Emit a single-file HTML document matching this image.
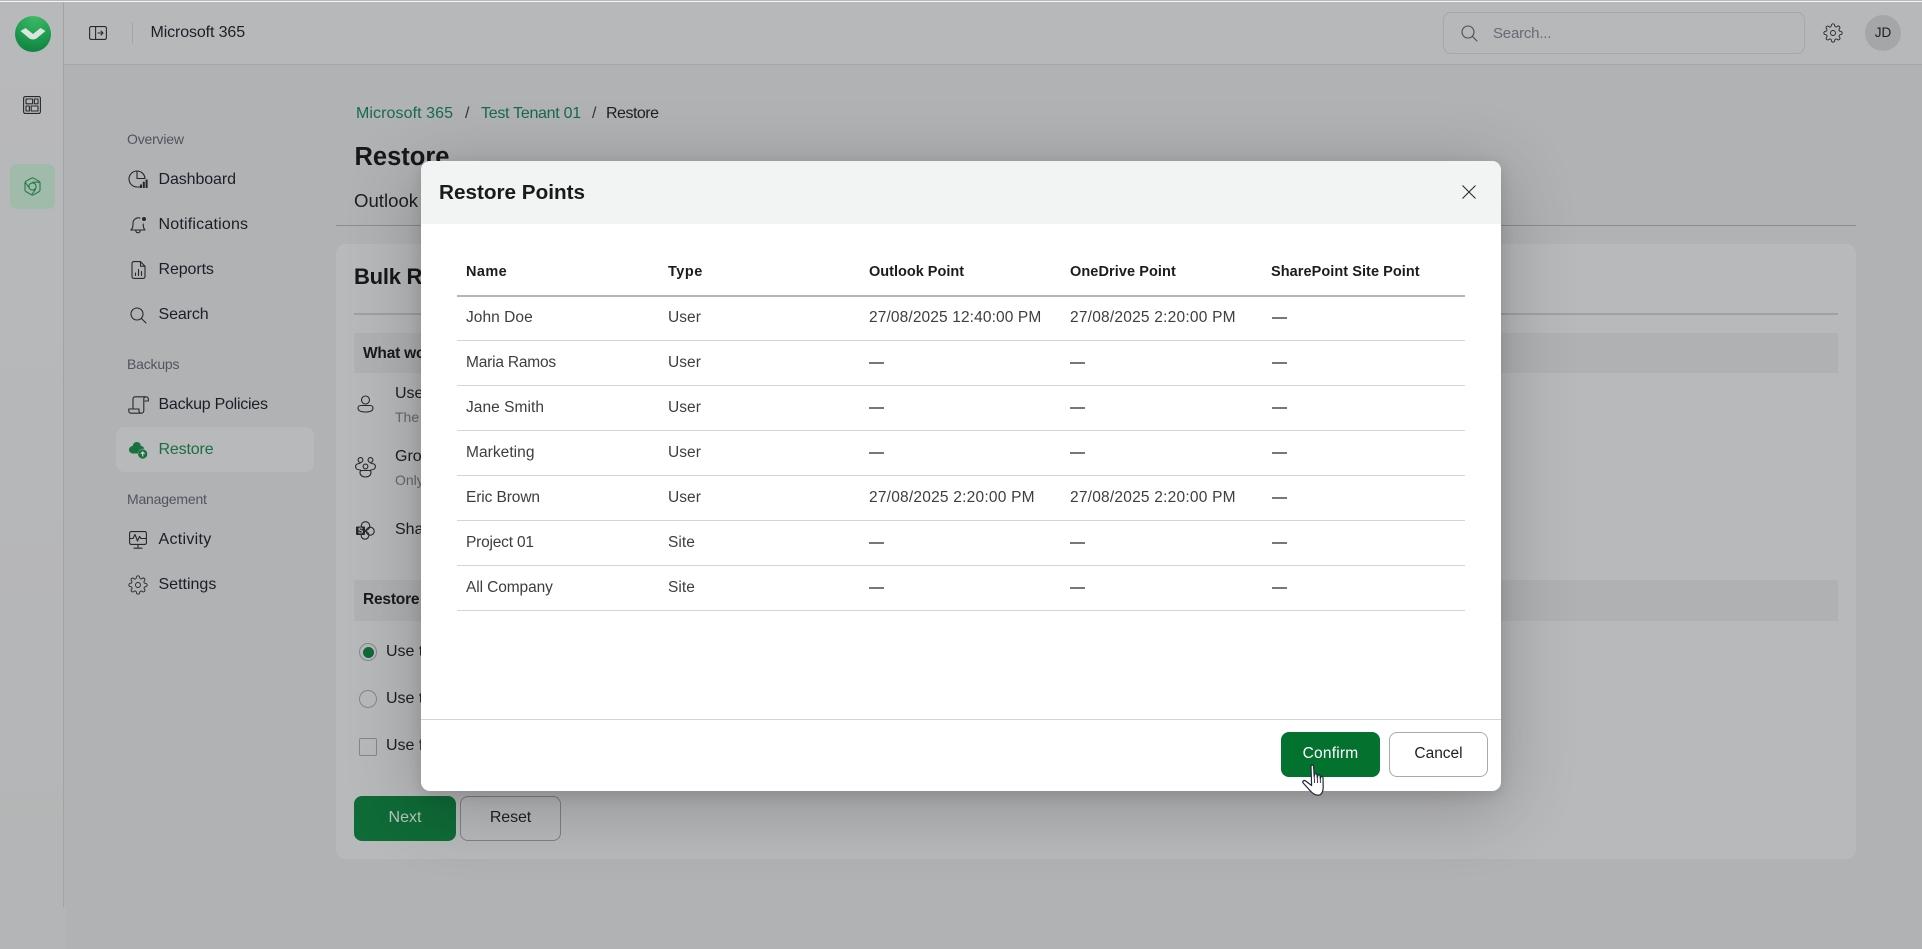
<!DOCTYPE html>
<html><head><meta charset="utf-8"><title>Restore Points</title>
<style>
html,body{margin:0;padding:0;width:1922px;height:949px;overflow:hidden;background:#b1b2b4}
body{position:relative;font-family:"Liberation Sans",sans-serif;color:#1b1d22}
.a{position:absolute}
.t{position:absolute;white-space:nowrap;line-height:20px;font-size:16px;margin-top:1px}
svg{position:absolute;overflow:visible}
.i{fill:none;stroke:#26282c;stroke-width:1.1;stroke-linecap:round;stroke-linejoin:round}
.lab{font-size:14px;color:#52545c;letter-spacing:-.2px;margin-top:0}
.nav{font-size:16px;color:#1c1e26}
.th{font-size:14.5px;font-weight:bold;color:#1c1c1c}
.td{font-size:15.5px;color:#3e3e3e;letter-spacing:.05px}
.d{position:absolute;height:1px;width:15px;background:#777;border-top:1px solid #777}
.ln{position:absolute;left:457px;width:1008px;height:1px;background:#d4d4d4}
</style></head><body>
<!-- base -->
<div class="a" style="left:0;top:0;width:1922px;height:1px;background:#b8b9bb"></div>
<div class="a" style="left:0;top:1px;width:1922px;height:1px;background:#f4f4f4;z-index:5"></div>
<div class="a" style="left:0;top:2px;width:63px;height:905px;background:linear-gradient(#b8b9bb,#b4b5b6)"></div>
<div class="a" style="left:0;top:907px;width:66px;height:42px;background:#b4b5b6"></div>
<div class="a" style="left:63px;top:2px;width:1px;height:905px;background:#a3a4a6"></div>
<div class="a" style="left:64px;top:2px;width:1858px;height:62px;background:#b7b8ba"></div>
<div class="a" style="left:64px;top:64px;width:1858px;height:1px;background:#a5a6a8"></div>

<!-- logo -->
<div class="a" style="left:15px;top:16px;width:36px;height:36px;border-radius:50%;background:radial-gradient(circle at 55% 0%,#3fbb66 0%,#22a253 45%,#0b7a3c 100%)"></div>
<svg style="left:15px;top:16px" width="36" height="36" viewBox="0 0 36 36"><path d="M5.5 15 L10.5 12 L18 18 L25.5 12 L30.5 15 L21.5 22.5 Q18 24.5 14.5 22.5 Z" fill="#dde4df"/></svg>
<!-- rail icons -->
<svg style="left:23px;top:96px" width="18" height="18" viewBox="0 0 18 18"><rect x=".6" y=".6" width="16.8" height="16.8" rx="1.6" class="i" stroke-width="1.2"/><rect x="3" y="3" width="6.6" height="4.8" class="i"/><rect x="11.4" y="3" width="3.6" height="4.8" class="i"/><rect x="3" y="10" width="3.4" height="5" class="i"/><rect x="8.2" y="10" width="6.8" height="5" class="i"/></svg>
<div class="a" style="left:10px;top:164px;width:45px;height:45px;border-radius:7px;background:#a1bbaa"></div>
<svg style="left:24px;top:177px" width="17" height="19" viewBox="0 0 17 19"><g fill="none" stroke="#217a49" stroke-width="1.1" stroke-linejoin="round"><path d="M7.4 1.2 Q8.5 .6 9.6 1.2 L15.2 4.3 Q16 4.8 16 5.8 V13 Q16 14 15.2 14.5 L9.6 17.8 Q8.5 18.4 7.4 17.8 L1.8 14.5 Q1 14 1 13 V5.8 Q1 4.8 1.8 4.3 Z"/><circle cx="8.5" cy="9.5" r="3.6"/><path d="M1.2 5 L5.4 11.4 M15.8 5.2 H8.4 M7.6 18 L12 11.4"/></g></svg>

<!-- header -->
<svg style="left:89px;top:26px" width="18" height="14" viewBox="0 0 18 14"><rect x=".6" y=".6" width="16.8" height="12.8" rx="1.6" class="i" stroke-width="1.2"/><path d="M6.6.6 V13.4 M9 7 H14 M12 5 L14 7 L12 9" class="i"/></svg>
<div class="a" style="left:132px;top:22px;width:1px;height:22px;background:#a5a6a8"></div>
<div class="t" style="left:150.5px;top:22px;letter-spacing:-.12px;color:#1d1f27">Microsoft 365</div>
<div class="a" style="left:1443px;top:12px;width:360px;height:40px;border:1px solid #a6a7a9;border-radius:8px"></div>
<svg style="left:1461px;top:25px" width="17" height="17" viewBox="0 0 17 17"><circle cx="7" cy="7" r="6" class="i" style="stroke:#4a4d53"/><path d="M11.5 11.5 L16 16" class="i" style="stroke:#4a4d53"/></svg>
<div class="t" style="left:1493px;top:23px;font-size:15px;color:#666b75;letter-spacing:-.2px">Search...</div>
<svg style="left:1823px;top:23px" width="20" height="20" viewBox="0 0 24 24"><g class="i" stroke-width="1.4"><circle cx="12" cy="12" r="3"/><path d="M19.4 15a1.65 1.65 0 0 0 .33 1.82l.06.06a2 2 0 1 1-2.83 2.83l-.06-.06a1.65 1.65 0 0 0-2.82 1.17V21a2 2 0 1 1-4 0v-.09A1.65 1.65 0 0 0 7.2 19.7l-.06.06a2 2 0 1 1-2.83-2.83l.06-.06A1.65 1.65 0 0 0 3.2 14H3a2 2 0 1 1 0-4h.09A1.65 1.65 0 0 0 4.3 7.2l-.06-.06a2 2 0 1 1 2.83-2.83l.06.06A1.65 1.65 0 0 0 10 3.2V3a2 2 0 1 1 4 0v.09a1.65 1.65 0 0 0 2.82 1.17l.06-.06a2 2 0 1 1 2.83 2.83l-.06.06A1.65 1.65 0 0 0 20.8 10H21a2 2 0 1 1 0 4h-.09a1.65 1.65 0 0 0-1.51 1z"/></g></svg>
<div class="a" style="left:1865px;top:15px;width:36px;height:36px;border-radius:50%;background:#a5a6a8"></div>
<div class="t" style="left:1865px;top:22px;width:36px;text-align:center;font-size:13.5px;color:#1d1f27">JD</div>

<!-- sidenav -->
<div class="t lab" style="left:127px;top:129px">Overview</div>
<svg style="left:129px;top:170px" width="19" height="19" viewBox="0 0 19 19"><path d="M8 1 A8 8 0 1 0 8 17 H11" class="i"/><path d="M8 1 V8.5 H16 A8 8 0 0 0 8 1 Z" class="i"/><path d="M12 18 V14.5 M14.8 18 V11.8 M17.6 18 V9.5" stroke="#26282c" stroke-width="2" fill="none"/></svg>
<div class="t nav" style="left:158.5px;top:169px;letter-spacing:-.1px">Dashboard</div>
<svg style="left:130px;top:216px" width="17" height="18" viewBox="0 0 17 18"><path d="M10 2 A5.5 5.5 0 0 0 3 7 C3 11 2.6 12.5 .8 14 H15 C13.6 12.7 13.2 11 13.2 8 M5.8 14.5 C6 17.5 10 17.5 10.2 14.5" class="i"/><circle cx="14" cy="3" r="2" fill="#26282c"/></svg>
<div class="t nav" style="left:158.5px;top:214px;letter-spacing:.2px">Notifications</div>
<svg style="left:131px;top:261px" width="15" height="18" viewBox="0 0 15 18"><path d="M1 2.6 C1 1.3 1.6 .6 3 .6 H9.5 L14 5.2 V15.4 C14 16.7 13.3 17.4 12 17.4 H3 C1.7 17.4 1 16.7 1 15.4 Z M9.5 .6 V5.2 H14" class="i"/><path d="M4.5 14.5 V12 M7.5 14.5 V8.5 M10.5 14.5 V10.5" class="i"/></svg>
<div class="t nav" style="left:158.5px;top:259px;letter-spacing:-.1px">Reports</div>
<svg style="left:130px;top:307px" width="17" height="17" viewBox="0 0 17 17"><circle cx="7" cy="7" r="6" class="i"/><path d="M11.5 11.5 L16 16" class="i"/></svg>
<div class="t nav" style="left:158.5px;top:304px;letter-spacing:-.1px">Search</div>
<div class="t lab" style="left:127px;top:354px">Backups</div>
<svg style="left:128px;top:396px" width="21" height="18" viewBox="0 0 21 18"><path d="M5 13 V3 C5 1.6 6 .8 7.2 .8 H18 C19.4 .8 20.3 1.8 20.3 3 V5 H17 M18 .8 C16.5 .8 15.8 1.8 15.8 3 V14.5 C15.8 16 14.8 17.2 13.2 17.2 H3 C1.6 17.2 .8 16.2 .8 15 V13 H11 V15 C11 16.2 11.8 17.2 13.2 17.2" class="i"/></svg>
<div class="t nav" style="left:158.5px;top:394px;letter-spacing:-.25px">Backup Policies</div>
<div class="a" style="left:116px;top:427px;width:198px;height:45px;border-radius:9px;background:#b8b9bb"></div>
<svg style="left:129px;top:441px" width="19" height="18" viewBox="0 0 19 18"><path d="M8 1 C5.5 1 4 2.7 3.7 5 C1.6 5.2 0 6.8 0 8.8 C0 11 1.8 12.5 4 12.5 H9 C9.5 9.5 11.5 8 14.5 7.8 C14.8 7.8 15 7.8 15.3 7.8 C14.8 6.2 13.5 5 12 5 C11.6 2.7 10 1 8 1 Z" fill="#1a7140"/><circle cx="13.7" cy="13" r="4.6" fill="#1a7140"/><path d="M13.7 15.5 V11 M11.8 12.8 L13.7 11 L15.6 12.8" stroke="#c9d5cd" stroke-width="1.2" fill="none"/></svg>
<div class="t nav" style="left:158.5px;top:439px;color:#1a6e3f;letter-spacing:-.15px">Restore</div>
<div class="t lab" style="left:127px;top:489px">Management</div>
<svg style="left:129px;top:531px" width="18" height="18" viewBox="0 0 18 18"><rect x=".6" y=".6" width="16.8" height="12.8" rx="1.6" class="i"/><path d="M.6 7.5 H4 L6 3.5 L8.5 10 L10.5 5.5 L12 7.5 H17.4 M9 13.4 V17 M5 17.2 H13" class="i"/></svg>
<div class="t nav" style="left:158.5px;top:529px;letter-spacing:.3px">Activity</div>
<svg style="left:128px;top:575px" width="20" height="20" viewBox="0 0 24 24"><g class="i" stroke-width="1.4"><circle cx="12" cy="12" r="3"/><path d="M19.4 15a1.65 1.65 0 0 0 .33 1.82l.06.06a2 2 0 1 1-2.83 2.83l-.06-.06a1.65 1.65 0 0 0-2.82 1.17V21a2 2 0 1 1-4 0v-.09A1.65 1.65 0 0 0 7.2 19.7l-.06.06a2 2 0 1 1-2.83-2.83l.06-.06A1.65 1.65 0 0 0 3.2 14H3a2 2 0 1 1 0-4h.09A1.65 1.65 0 0 0 4.3 7.2l-.06-.06a2 2 0 1 1 2.83-2.83l.06.06A1.65 1.65 0 0 0 10 3.2V3a2 2 0 1 1 4 0v.09a1.65 1.65 0 0 0 2.82 1.17l.06-.06a2 2 0 1 1 2.83 2.83l-.06.06A1.65 1.65 0 0 0 20.8 10H21a2 2 0 1 1 0 4h-.09a1.65 1.65 0 0 0-1.51 1z"/></g></svg>
<div class="t nav" style="left:158.5px;top:574px">Settings</div>

<!-- page content -->
<div class="t" style="left:356px;top:103px;color:#17694a;letter-spacing:.08px">Microsoft 365</div>
<div class="t" style="left:465px;top:103px;color:#33353a">/</div>
<div class="t" style="left:481px;top:103px;color:#17694a;letter-spacing:-.28px">Test Tenant 01</div>
<div class="t" style="left:592px;top:103px;color:#33353a">/</div>
<div class="t" style="left:606px;top:103px;color:#1d1f25;letter-spacing:-.5px">Restore</div>
<div class="t" style="left:354.5px;top:146px;font-size:25.5px;font-weight:bold;color:#17181c">Restore</div>
<div class="t" style="left:354px;top:190px;font-size:18.6px;color:#1d1e22">Outlook</div>
<div class="a" style="left:336px;top:225px;width:1520px;height:1px;background:#8b8c8e"></div>
<div class="a" style="left:336px;top:244px;width:1520px;height:615px;border-radius:9px;background:#b8b9bb"></div>
<div class="t" style="left:354px;top:266px;font-size:22px;font-weight:bold;color:#17181c;letter-spacing:-.25px">Bulk Restore</div>
<div class="a" style="left:354px;top:313px;width:1484px;height:2px;background:#a0a1a3"></div>
<div class="a" style="left:354px;top:333px;width:1484px;height:40px;background:#b0b1b3"></div>
<div class="t" style="left:363px;top:343px;font-weight:bold;font-size:15.5px;color:#191a1e;letter-spacing:-.2px">What would</div>
<svg style="left:357px;top:395px" width="17" height="18" viewBox="0 0 17 18"><circle cx="8.5" cy="5" r="4" class="i"/><path d="M4 10.5 H13 C15 10.5 16 11.8 16 13 C16 15.8 13 17 8.5 17 C4 17 1 15.8 1 13 C1 11.8 2 10.5 4 10.5 Z" class="i"/></svg>
<div class="t" style="left:395px;top:383px;color:#1c1e22">User</div>
<div class="t" style="left:395px;top:406px;font-size:14px;color:#66686c">The</div>
<svg style="left:355px;top:457px" width="21" height="21" viewBox="0 0 21 21"><circle cx="5.5" cy="3" r="2.4" class="i"/><circle cx="15.5" cy="3" r="2.4" class="i"/><circle cx="10.5" cy="9.5" r="2.4" class="i"/><path d="M5 6.5 C2 6.5 .6 7.8 .6 9.5 C.6 12 3 13 5.5 13 M16 6.5 C19 6.5 20.4 7.8 20.4 9.5 C20.4 12 18 13 15.5 13 M7 13.5 H14 C15.4 13.5 16 14.5 16 15.5 C16 18.5 13.5 20 10.5 20 C7.5 20 5 18.5 5 15.5 C5 14.5 5.6 13.5 7 13.5 Z" class="i"/></svg>
<div class="t" style="left:395px;top:446px;color:#1c1e22">Groups</div>
<div class="t" style="left:395px;top:469px;font-size:14px;color:#66686c">Only</div>
<svg style="left:356px;top:521px" width="19" height="19" viewBox="0 0 19 19"><circle cx="9.5" cy="5" r="4.3" class="i"/><circle cx="14.2" cy="10.2" r="4" class="i"/><circle cx="9" cy="14.3" r="3.9" class="i"/><rect x="0" y="5.5" width="9" height="8.5" rx="1" fill="#26282c"/><text x="4.5" y="12.4" text-anchor="middle" font-size="8" font-weight="bold" fill="#b8b9bb" font-family="Liberation Sans">S</text></svg>
<div class="t" style="left:395px;top:519px;color:#1c1e22">SharePoint</div>
<div class="a" style="left:354px;top:580px;width:1484px;height:41px;background:#b0b1b3"></div>
<div class="t" style="left:363px;top:589px;font-weight:bold;font-size:15.5px;color:#191a1e;letter-spacing:-.2px">Restore from</div>
<div class="a" style="left:359px;top:643px;width:16px;height:16px;border:1px solid #86878a;border-radius:50%;background:#b8b9bb"></div>
<div class="a" style="left:362.5px;top:646.5px;width:11px;height:11px;border-radius:50%;background:#0f6b37"></div>
<div class="t" style="left:386px;top:641px;color:#1c1e22">Use the</div>
<div class="a" style="left:359px;top:690px;width:16px;height:16px;border:1px solid #86878a;border-radius:50%"></div>
<div class="t" style="left:386px;top:688px;color:#1c1e22">Use the</div>
<div class="a" style="left:359px;top:738px;width:16px;height:16px;border:1px solid #86878a;border-radius:2px"></div>
<div class="t" style="left:386px;top:735px;color:#1c1e22">Use full</div>
<div class="a" style="left:354px;top:796px;width:102px;height:45px;border-radius:8px;background:#0f6b37"></div>
<div class="t" style="left:354px;top:807px;width:102px;text-align:center;color:#b5c6ba">Next</div>
<div class="a" style="left:460px;top:796px;width:99px;height:43px;border:1px solid #7f8082;border-radius:8px"></div>
<div class="t" style="left:460px;top:807px;width:101px;text-align:center;color:#1f2025;letter-spacing:-.1px">Reset</div>

<!-- dialog -->
<div class="a" style="left:421px;top:161px;width:1080px;height:630px;border-radius:9px;background:#fff;box-shadow:0 14px 70px 6px rgba(0,0,0,.2),0 4px 14px rgba(0,0,0,.12);overflow:hidden">
  <div class="a" style="left:0;top:0;width:1080px;height:63px;background:#f2f4f3"></div>
  <div class="a" style="left:0;top:558px;width:1080px;height:1px;background:#d4d4d4"></div>
</div>
<div class="t" style="left:439px;top:181.5px;font-size:20.7px;font-weight:bold;color:#191a1c">Restore Points</div>
<svg style="left:1462px;top:185px" width="14" height="14" viewBox="0 0 14 14"><path d="M.5 .5 L13.5 13.5 M13.5 .5 L.5 13.5" stroke="#2a2a2a" stroke-width="1.1" fill="none"/></svg>

<div class="t th" style="left:466px;top:261px;letter-spacing:.4px">Name</div>
<div class="t th" style="left:668px;top:261px;letter-spacing:.5px">Type</div>
<div class="t th" style="left:869px;top:261px">Outlook Point</div>
<div class="t th" style="left:1070px;top:261px;letter-spacing:.08px">OneDrive Point</div>
<div class="t th" style="left:1271px;top:261px;letter-spacing:.06px">SharePoint Site Point</div>
<div class="ln" style="top:295px;background:#b5b5b5;height:2px"></div>
<div class="ln" style="top:340px"></div><div class="ln" style="top:385px"></div><div class="ln" style="top:430px"></div><div class="ln" style="top:475px"></div><div class="ln" style="top:520px"></div><div class="ln" style="top:565px"></div><div class="ln" style="top:610px"></div>

<div class="t td" style="left:466px;top:307px">John Doe</div><div class="t td" style="left:668px;top:307px">User</div><div class="t td" style="left:869px;top:307px;letter-spacing:.12px">27/08/2025 12:40:00 PM</div><div class="t td" style="left:1070px;top:307px;letter-spacing:.22px">27/08/2025 2:20:00 PM</div><div class="d" style="left:1272px;top:317px"></div>
<div class="t td" style="left:466px;top:352px;letter-spacing:-.2px">Maria Ramos</div><div class="t td" style="left:668px;top:352px">User</div><div class="d" style="left:869px;top:362px"></div><div class="d" style="left:1070px;top:362px"></div><div class="d" style="left:1272px;top:362px"></div>
<div class="t td" style="left:466px;top:397px">Jane Smith</div><div class="t td" style="left:668px;top:397px">User</div><div class="d" style="left:869px;top:407px"></div><div class="d" style="left:1070px;top:407px"></div><div class="d" style="left:1272px;top:407px"></div>
<div class="t td" style="left:466px;top:442px">Marketing</div><div class="t td" style="left:668px;top:442px">User</div><div class="d" style="left:869px;top:452px"></div><div class="d" style="left:1070px;top:452px"></div><div class="d" style="left:1272px;top:452px"></div>
<div class="t td" style="left:466px;top:487px;letter-spacing:-.1px">Eric Brown</div><div class="t td" style="left:668px;top:487px">User</div><div class="t td" style="left:869px;top:487px;letter-spacing:.22px">27/08/2025 2:20:00 PM</div><div class="t td" style="left:1070px;top:487px;letter-spacing:.22px">27/08/2025 2:20:00 PM</div><div class="d" style="left:1272px;top:497px"></div>
<div class="t td" style="left:466px;top:532px;letter-spacing:-.2px">Project 01</div><div class="t td" style="left:668px;top:532px">Site</div><div class="d" style="left:869px;top:542px"></div><div class="d" style="left:1070px;top:542px"></div><div class="d" style="left:1272px;top:542px"></div>
<div class="t td" style="left:466px;top:577px;letter-spacing:-.1px">All Company</div><div class="t td" style="left:668px;top:577px">Site</div><div class="d" style="left:869px;top:587px"></div><div class="d" style="left:1070px;top:587px"></div><div class="d" style="left:1272px;top:587px"></div>

<div class="a" style="left:1281px;top:732px;width:99px;height:45px;border-radius:8px;background:#03722f"></div>
<div class="t" style="left:1281px;top:743px;width:99px;text-align:center;color:#fff;font-size:15.5px;letter-spacing:.2px">Confirm</div>
<div class="a" style="left:1389px;top:732px;width:97px;height:43px;border:1px solid #a9a9a9;border-radius:8px;background:#fff"></div>
<div class="t" style="left:1389px;top:743px;width:99px;text-align:center;color:#222;font-size:15.5px">Cancel</div>

<!-- cursor -->
<svg style="left:1301px;top:763px" width="28" height="34" viewBox="0 0 28 34"><path d="M10 3.5 C10 1.5 12.6 1.5 12.6 3.5 L13.2 13.5 L13.6 11.5 C14 10.3 15.8 10.4 16 11.8 L16.3 14.5 L16.8 12.6 C17.2 11.5 19 11.7 19.1 13 L19.3 15.5 L19.9 14 C20.4 13 21.9 13.3 22 14.5 L22.2 24 C22.2 28.5 20.5 32.2 17 32.2 C13.5 32.2 11 30 8.5 27 L2.2 20 C1 18.4 3 16.6 4.7 18 L10.6 22.5 Z" fill="#fff" stroke="#23263a" stroke-width="1.2" stroke-linejoin="round"/><path d="M13.2 13.5 L13.6 20 M16.3 14.5 L16.5 20 M19.3 15.5 L19.4 20" stroke="#23263a" stroke-width=".9" fill="none"/></svg>
</body></html>
